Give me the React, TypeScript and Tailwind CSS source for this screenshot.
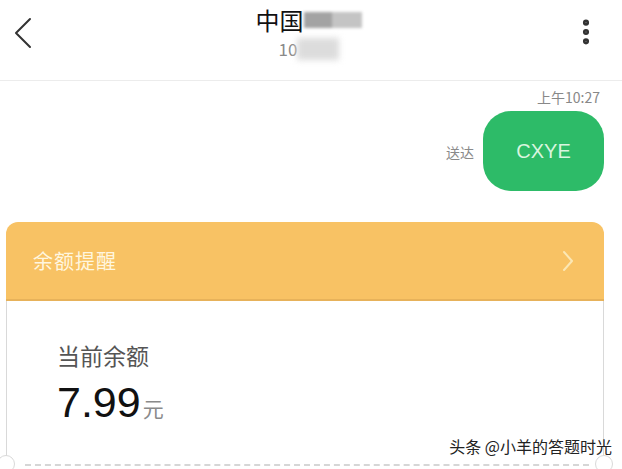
import { MoreVertical } from "lucide-react";

const font = { fontFamily: '"Noto Sans CJK SC", "Noto Sans", sans-serif' };

function Header() {
  return (
    <header className="relative h-[81px] border-b border-[#ececec] flex items-start justify-center">
      {/* back */}
      <svg className="absolute left-[13px] top-[17px]" width="20" height="32" viewBox="0 0 20 32" fill="none">
        <path d="M17 2 L3 16 L17 30" stroke="#333" strokeWidth="2" strokeLinecap="round" strokeLinejoin="round" />
      </svg>

      <div className="flex flex-col items-start pt-[5px] ml-[-5px]">
        <div className="flex items-center">
          <span className="text-[24px] leading-[30px] text-[#111]">中国</span>
          <span className="flex w-[58px] h-[16px] blur-[1.5px]">
            <span className="w-[28px] bg-[#a3a3a3]" />
            <span className="w-[30px] bg-[#c4c4c4]" />
          </span>
        </div>
        <div className="flex items-center ml-[23px] mt-[3px]">
          <span className="text-[17px] leading-[20px] text-[#8a8a8a]">10</span>
          <span className="w-[42px] h-[22px] bg-[#dcdcdc] blur-[3px]" />
        </div>
      </div>

      <MoreVertical className="absolute right-[20px] top-[16px] w-[32px] h-[32px] text-[#333]" strokeWidth={2.6} />
    </header>
  );
}

function Message() {
  return (
    <div className="flex flex-col items-end pr-[18px]">
      <div className="mt-[7px] mr-[4px] text-[14px] leading-[18px] text-[#888]">上午10:27</div>
      <div className="mt-[5px] flex items-center gap-[9px]">
        <span className="text-[14px] text-[#8a8a8a] mt-[2px]">送达</span>
        <div className="w-[121px] h-[80px] rounded-[28px] bg-[#2dbb68] flex items-center justify-center">
          <span className="text-[20px] text-[#d9f5df]" style={{ fontFamily: '"Liberation Sans", sans-serif' }}>CXYE</span>
        </div>
      </div>
    </div>
  );
}

function BalanceCard() {
  return (
    <div className="mt-[31px] ml-[6px] mr-[18px] relative">
      <div className="h-[79px] rounded-t-[12px] bg-[#f8c264] border-b-2 border-[#e7b25a] flex items-center justify-between pl-[27px] pr-[30px]">
        <span className="text-[20px] text-[#fff6df] tracking-[1px]">余额提醒</span>
        <svg width="12" height="22" viewBox="0 0 12 22" fill="none">
          <path d="M2 2 L10 11 L2 20" stroke="#fbe7b4" strokeWidth="2" strokeLinecap="round" strokeLinejoin="round" />
        </svg>
      </div>
      <div className="h-[170px] border-x border-[#d9d9d9] bg-white pl-[50px] pt-[38px]">
        <div className="text-[23px] leading-[32px] text-[#555]">当前余额</div>
        <div className="flex items-baseline mt-[6px]">
          <span className="text-[43px] leading-[50px] text-[#111]" style={{ fontFamily: '"Liberation Sans", sans-serif' }}>7.99</span>
          <span className="text-[21px] text-[#8a8a8a] ml-[2px]">元</span>
        </div>
        <div className="mt-[37px] ml-[-32px] mr-[14px] border-t-2 border-dashed border-[#d6d6d6]" />
      </div>
      {/* notches */}
      <div className="absolute left-[-9px] top-[233px] w-[18px] h-[18px] rounded-full bg-white border border-[#d9d9d9]" />
      <div className="absolute right-[-9px] top-[233px] w-[18px] h-[18px] rounded-full bg-white border border-[#d9d9d9]" />
    </div>
  );
}

export default function App() {
  return (
    <div className="w-[622px] h-[469px] overflow-hidden bg-white relative" style={font}>
      <Header />
      <Message />
      <BalanceCard />
      <div className="absolute right-[10px] top-[434px] text-[16px] text-[#222]">头条 @小羊的答题时光</div>
    </div>
  );
}
